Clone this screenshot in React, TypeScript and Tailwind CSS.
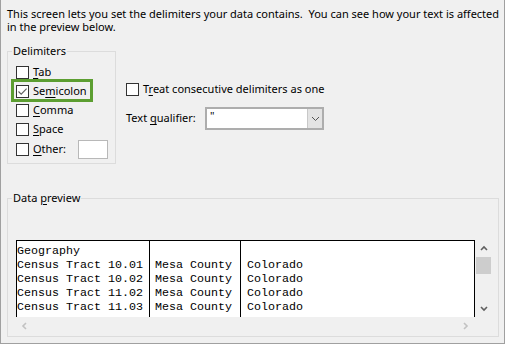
import React from "react";

const rows = [
  ["Geography", "", ""],
  ["Census Tract 10.01", "Mesa County", "Colorado"],
  ["Census Tract 10.02", "Mesa County", "Colorado"],
  ["Census Tract 11.02", "Mesa County", "Colorado"],
  ["Census Tract 11.03", "Mesa County", "Colorado"],
];

const CheckBox = ({ checked }: { checked?: boolean }) => (
  <span className="w-[13px] h-[13px] border border-[#333333] bg-white flex items-center justify-center shrink-0">
    {checked && (
      <svg width="11" height="11" viewBox="0 0 11 11">
        <path d="M1.5 5.5 L4.2 8.2 L9.6 2.6" stroke="#606060" strokeWidth="1.1" fill="none" />
      </svg>
    )}
  </span>
);

const U = ({ children }: { children: React.ReactNode }) => (
  <span className="underline underline-offset-[2px]">{children}</span>
);

const Chevron = ({ dir, color }: { dir: "up" | "down" | "left" | "right"; color: string }) => {
  const d = {
    up: "M1 5 L4 2 L7 5",
    down: "M1 2 L4 5 L7 2",
    left: "M5 1 L2 4 L5 7",
    right: "M2 1 L5 4 L2 7",
  }[dir];
  return (
    <svg width="8" height="8" viewBox="0 0 8 8">
      <path d={d} stroke={color} strokeWidth="1.6" fill="none" />
    </svg>
  );
};

export default function App() {
  return (
    <div className="w-[505px] h-[344px] bg-[#f0f0f0] border-l border-r border-b border-[#a0a0a0] pl-[6px] pt-[7px] font-['Noto_Sans',sans-serif] text-[11px] text-black">
      <p className="leading-[13px] whitespace-pre">
        {"This screen lets you set the delimiters your data contains.  You can see how your text is affected"}
        <br />
        {"in the preview below."}
      </p>

      <div className="flex mt-[10px]">
        <fieldset className="w-[109px] border border-[#dcdcdc] pb-[4px]">
          <legend className="ml-[4px] px-[1px] leading-[16px]">Delimiters</legend>
          <div className="flex flex-col pt-[4px] pl-[8px]">
            <label className="h-[19px] flex items-center gap-[4px]">
              <CheckBox />
              <span>
                <U>T</U>ab
              </span>
            </label>
            <label className="relative h-[19px] flex items-center gap-[4px]">
              <CheckBox checked />
              <span>
                Se<U>m</U>icolon
              </span>
              <span className="absolute left-[-5px] top-[-3px] w-[82px] h-[23px] border-[3px] border-[#5c9e31]" />
            </label>
            <label className="h-[19px] flex items-center gap-[4px]">
              <CheckBox />
              <span>
                <U>C</U>omma
              </span>
            </label>
            <label className="h-[19px] flex items-center gap-[4px]">
              <CheckBox />
              <span>
                <U>S</U>pace
              </span>
            </label>
            <label className="h-[19px] mt-[1px] flex items-center gap-[4px]">
              <CheckBox />
              <span className="w-[41px]">
                <U>O</U>ther:
              </span>
              <span className="w-[30px] h-[19px] bg-white border border-[#b8b8b8]" />
            </label>
          </div>
        </fieldset>

        <div className="ml-[10px] flex flex-col">
          <label className="mt-[37px] h-[19px] flex items-center gap-[4px]">
            <CheckBox />
            <span>
              T<U>r</U>eat consecutive delimiters as one
            </span>
          </label>
          <div className="mt-[8px] flex items-center">
            <span className="w-[79px]">
              Text <U>q</U>ualifier:
            </span>
            <div className="w-[119px] h-[23px] border-2 border-[#adadad] bg-white flex">
              <span className="flex-1 pl-[3px] leading-[14px]">"</span>
              <span className="w-[15px] bg-[#e3e3e3] border-l border-[#c8c8c8] flex items-center justify-center">
                <svg width="9" height="6" viewBox="0 0 9 6">
                  <path d="M1 1 L4.5 4.5 L8 1" stroke="#555555" strokeWidth="1" fill="none" />
                </svg>
              </span>
            </div>
          </div>
        </div>
      </div>

      <fieldset className="mt-[26px] w-[492px] border border-[#dcdcdc] pb-[2px]">
        <legend className="ml-[4px] px-[1px] leading-[16px]">
          Data <U>p</U>review
        </legend>
        <div className="mt-[34px] ml-[8px] mr-[6px] grid grid-cols-[1fr_17px] grid-rows-[77px_17px]">
          <div className="bg-white border-t border-l border-r border-black flex font-['Liberation_Mono',monospace] text-[11.67px] leading-[14px] whitespace-pre">
            <div className="w-[133px] border-r border-black pt-[3px]">
              {rows.map((r, i) => (
                <div key={i} className="h-[14px]">{r[0]}</div>
              ))}
            </div>
            <div className="w-[91px] border-r border-black pt-[3px] pl-[5px]">
              {rows.map((r, i) => (
                <div key={i} className="h-[14px]">{r[1]}</div>
              ))}
            </div>
            <div className="flex-1 pt-[3px] pl-[6px]">
              {rows.map((r, i) => (
                <div key={i} className="h-[14px]">{r[2]}</div>
              ))}
            </div>
          </div>
          <div className="flex flex-col">
            <div className="h-[17px] flex items-center justify-center">
              <Chevron dir="up" color="#606060" />
            </div>
            <div className="flex-1 px-[1px]">
              <div className="h-[17px] bg-[#cdcdcd]" />
            </div>
            <div className="h-[17px] flex items-center justify-center">
              <Chevron dir="down" color="#606060" />
            </div>
          </div>
          <div className="flex items-center justify-between px-[5px]">
            <Chevron dir="left" color="#c2c2c2" />
            <Chevron dir="right" color="#c2c2c2" />
          </div>
          <div />
        </div>
      </fieldset>
    </div>
  );
}
